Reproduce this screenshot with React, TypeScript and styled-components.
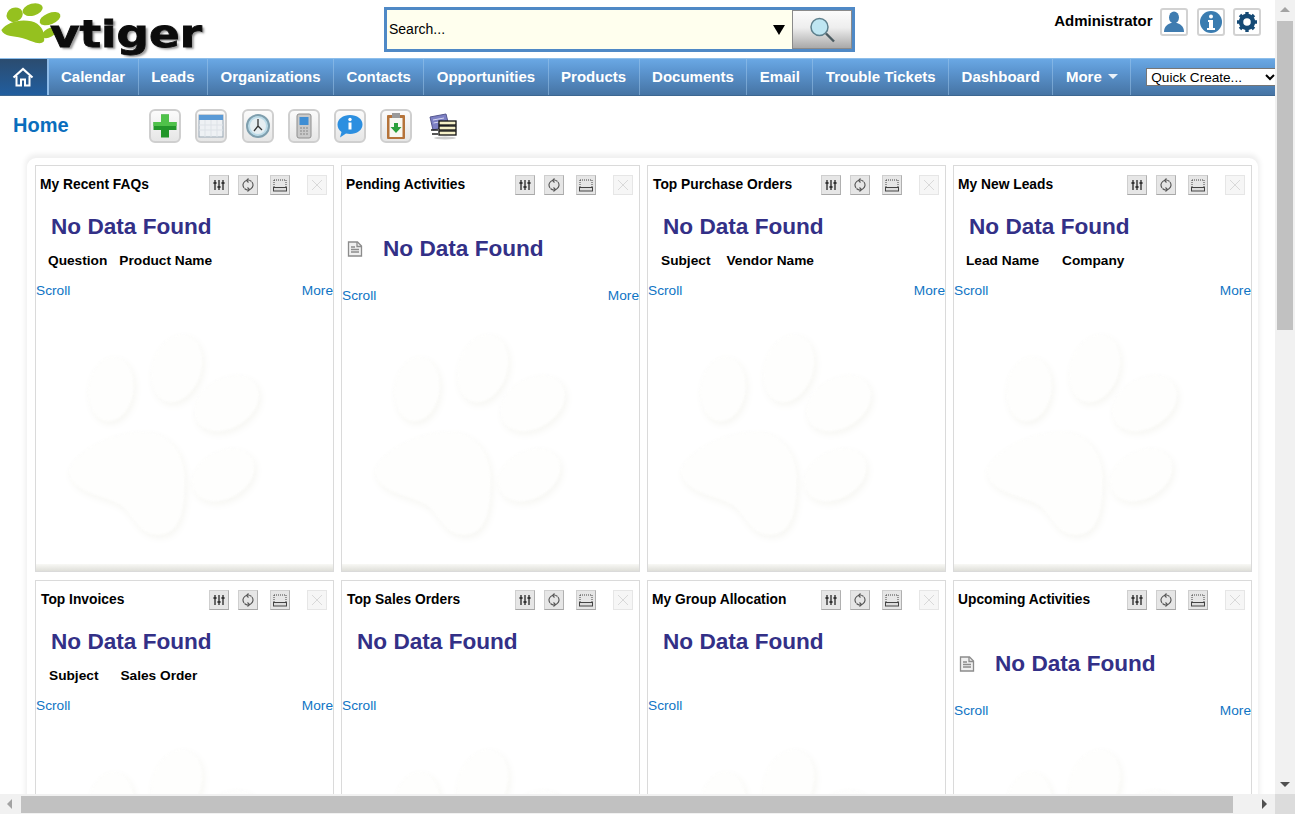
import React from "react";
import styled, { createGlobalStyle } from "styled-components";

const Global = createGlobalStyle`
  html, body { margin: 0; padding: 0; height: 100%; overflow: hidden; background: #fff; }
  body { font-family: "Liberation Sans", Arial, sans-serif; color: #000; }
  * { box-sizing: border-box; }
`;

const Shell = styled.div`
  width: 1295px; height: 814px; display: grid;
  grid-template-columns: 1275px 20px; grid-template-rows: 794px 20px; overflow: hidden;
`;
const Page = styled.div`overflow: hidden; background: #fff;`;

const VScroll = styled.div`
  background: #f1f1f1; display: flex; flex-direction: column; align-items: center; padding-top: 7px;
`;
const ArrowUp = styled.div`
  width: 0; height: 0; border-left: 5px solid transparent; border-right: 5px solid transparent;
  border-bottom: 5px solid #a3a3a3;
`;
const ArrowDown = styled.div`
  width: 0; height: 0; border-left: 5px solid transparent; border-right: 5px solid transparent;
  border-top: 5px solid #505050; margin-top: auto; margin-bottom: 7px;
`;
const VThumb = styled.div`width: 16px; height: 309px; margin-top: 9px; background: #c1c1c1;`;
const HScroll = styled.div`
  background: #f1f1f1; display: flex; align-items: center; padding: 0 7px;
`;
const ArrowLeft = styled.div`
  width: 0; height: 0; border-top: 5px solid transparent; border-bottom: 5px solid transparent;
  border-right: 5px solid #a3a3a3;
`;
const ArrowRight = styled.div`
  width: 0; height: 0; border-top: 5px solid transparent; border-bottom: 5px solid transparent;
  border-left: 5px solid #505050; margin-left: auto; margin-right: 1px;
`;
const HThumb = styled.div`width: 1212px; height: 17px; margin-left: 9px; background: #c1c1c1;`;
const Corner = styled.div`background: #dcdcdc;`;

const Header = styled.header`display: flex; height: 58px; padding-right: 13px;`;
const Logo = styled.div`position: relative; width: 205px; height: 58px; flex: none;`;
const LogoPaw = styled.svg`position: absolute; left: 0; top: 0; filter: blur(.4px);`;
const LogoText = styled.span`
  position: absolute; left: 50px; top: 12px; font: bold 38px/44px "DejaVu Sans", sans-serif;
  color: #0c0c0c; text-shadow: 2px 2px 2px #999; -webkit-text-stroke: .8px #0c0c0c;
  transform: scaleX(1.19); transform-origin: left center; filter: blur(.4px);
`;
const Search = styled.form`
  margin: 7px 0 0 179px; width: 471px; height: 45px; border: 3px solid #4f89c6; background: #ffffee;
  display: flex; align-items: stretch;
`;
const SearchInput = styled.input`
  flex: 1; min-width: 0; border: 0; background: transparent; padding: 0 0 2px 2px;
  font: 14px "Liberation Sans", sans-serif; color: #000; outline: none;
`;
const SearchCaret = styled.span`
  align-self: center; width: 0; height: 0; margin: 0 7px 0 0;
  border-left: 6px solid transparent; border-right: 6px solid transparent; border-top: 10px solid #000;
`;
const SearchButton = styled.button`
  width: 60px; padding: 0; border: 1px solid #8a8a8a; background: linear-gradient(#fbfbfb 0%, #eeeeee 45%, #a9a9a9 100%);
  display: flex; align-items: center; justify-content: center;
`;
const UserBox = styled.div`margin-left: auto; display: flex; gap: 8.5px; padding: 8px 1px 0 0; align-items: flex-start;`;
const UserName = styled.span`
  font: bold 15px/26px "Liberation Sans", sans-serif; margin-right: -1px;
`;
const UserTile = styled.button`
  width: 28px; height: 28px; padding: 0; background: #fff; border: 2px solid #d2d2d2; border-radius: 3px;
  display: flex; align-items: center; justify-content: center;
`;

const Nav = styled.nav`
  display: flex; height: 38px; overflow: hidden; align-items: stretch;
  background: linear-gradient(#6aa8e4 0%, #5d97d2 30%, #4674a4 100%);
  border-top: 1px solid #8dbeea; border-bottom: 1px solid #3d6791;
`;
const HomeTab = styled.a`
  width: 48.5px; flex: none; display: flex; align-items: center; justify-content: center;
  background: linear-gradient(#2b4c6f, #215e9f); border-right: 2px solid #8dbbe8; padding-right: 1px;
`;
const NavItem = styled.a`
  flex: none; padding: 0 12.5px 1px; display: flex; align-items: center; gap: 6px; color: #fff;
  font: bold 15px "Liberation Sans", sans-serif; border-right: 1px solid rgba(160,200,235,.5);
`;
const MoreCaret = styled.span`
  width: 0; height: 0; border-left: 5px solid transparent; border-right: 5px solid transparent;
  border-top: 5px solid #eaf2fa;
`;
const QuickCreate = styled.select`
  flex: none; width: 133px; height: 18px; margin: 9px 0 0 15px; padding: 0; background: #fff; color: #000;
  font: 13.6px "Liberation Sans", sans-serif; border: 1px solid #767676;
`;

const ActionRow = styled.div`display: flex; height: 54px; padding-top: 13px;`;
const PageTitle = styled.h1`
  margin: 0; width: 149px; padding: 4px 0 0 13px; font: bold 20px/24px "Liberation Sans", sans-serif; color: #0a6ebd; flex: none;
`;
const Actions = styled.div`display: flex; gap: 14.3px; align-items: flex-start;`;
const ActionTile = styled.button`
  width: 32px; height: 34px; padding: 0; border: 2px solid #cfcfcf; border-radius: 6px;
  background: linear-gradient(#fbfbfb, #e6e6e6); display: flex; align-items: center; justify-content: center;
`;
const PlainAction = styled.span`width: 32px; height: 34px; display: flex; align-items: center; justify-content: center;`;

const Frame = styled.div`
  margin: 8px 17px 0 27px; padding: 7px 6px 0 8px; background: #fff; border-radius: 9px 9px 0 0;
  box-shadow: 0 -2px 5px 2px #f0f0f0;
`;
const Grid = styled.div`display: grid; grid-template-columns: repeat(4, 299px); column-gap: 7px; row-gap: 8px;`;
const Card = styled.section`
  position: relative; height: 407px; border: 1px solid #dadada; background: #fff; overflow: hidden;
  &::after {
    content: ""; position: absolute; left: 0; right: 0; bottom: 0; height: 7px;
    background: linear-gradient(#f8f8f5, #dfdfd9);
  }
`;
const Watermark = styled.svg`
  position: absolute; left: -6px; top: 154px; filter: blur(1px) drop-shadow(2px 3px 3px #f6f6f2);
`;
const CardHead = styled.div<{ $left: number }>`
  position: relative; height: 38px; display: flex; align-items: center; padding: 0 0 0 ${(p) => p.$left}px;
`;
const CardTitle = styled.h2`margin: 0; font: bold 13.8px/16px "Liberation Sans", sans-serif; color: #000;`;
const CardTools = styled.div`
  position: absolute; left: 173px; top: 9px; display: flex; gap: 9px;
`;
const Tool = styled.button<{ $off?: boolean; $extra?: number }>`
  width: 20px; height: 20px; padding: 0; margin-left: ${(p) => p.$extra ?? 0}px;
  border: 1px solid ${(p) => (p.$off ? "#e6e6e6" : "#cfcfcf")};
  border-right-color: ${(p) => (p.$off ? "#e6e6e6" : "#b0b0b0")};
  border-bottom-color: ${(p) => (p.$off ? "#e6e6e6" : "#a8a8a8")};
  background: ${(p) => (p.$off ? "#f6f6f6" : "#e6e6e6")};
  display: flex; align-items: center; justify-content: center;
`;
const CardBody = styled.div<{ $doc?: boolean }>`
  position: relative; padding-top: ${(p) => (p.$doc ? 31 : 9)}px;
`;
const Message = styled.div<{ $left: number }>`
  display: flex; align-items: center; gap: 20px; padding-left: ${(p) => p.$left}px; height: 28px;
  font: bold 22.6px/28px "Liberation Sans", sans-serif; color: #333087;
`;
const Columns = styled.div<{ $left: number; $gap: number }>`
  display: flex; gap: ${(p) => p.$gap}px; height: 16px; margin-top: 12px; padding-left: ${(p) => p.$left}px;
  font: bold 13.7px/16px "Liberation Sans", sans-serif; color: #000;
`;
const Foot = styled.div<{ $top: number }>`
  display: flex; justify-content: space-between; padding-top: ${(p) => p.$top}px;
  font: 13.7px/16px "Liberation Sans", sans-serif; color: #0f74c4;
`;

const I = (p: React.SVGProps<SVGSVGElement>) => <svg width="16" height="16" viewBox="0 0 16 16" fill="none" {...p} />;

const PawMark = () => (
  <Watermark width="320" height="270" viewBox="0 0 960 810" fill="#fefefd">
    <ellipse cx="243" cy="207" rx="68" ry="98" transform="rotate(8 243 207)" />
    <ellipse cx="440" cy="145" rx="74" ry="105" transform="rotate(18 440 145)" />
    <ellipse cx="590" cy="250" rx="105" ry="75" transform="rotate(-32 590 250)" />
    <ellipse cx="580" cy="465" rx="100" ry="72" transform="rotate(-30 580 465)" />
    <path d="M115 450C135 400 230 335 340 335C420 335 465 400 465 480C465 560 455 645 385 645C320 645 310 580 270 555C220 525 120 520 115 450Z" />
  </Watermark>
);

const DocIcon = () => (
  <svg width="16" height="16" viewBox="0 0 16 16" fill="#f0f0f0" stroke="#8c8c8c" strokeWidth="1.3">
    <path d="M1.5 1h9l4 4v10h-13z" />
    <path d="M10 1v4.5h4.5M4 6h4M4 8.5h8M4 11h8" fill="none" />
  </svg>
);

const toolIcons = [
  <I key="a" stroke="#333" strokeWidth="1.4"><path d="M4 3v10M8 3v10M12 3v10" /><path d="M2.5 6h3M6.5 10h3M10.5 6h3" strokeWidth="2" /></I>,
  <I key="b" stroke="#555" strokeWidth="1.1"><path d="M11.5 4.5A5 5 0 0 0 4 11M4.5 11.5A5 5 0 0 0 12 5" /><path d="M8.5 1.5l-2 2 2 2M7.500 10.500l2 2-2 2" /></I>,
  <I key="c" stroke="#444" strokeWidth="1"><path d="M2 3h12" strokeDasharray="1 1" /><path d="M2 3v7M14 3v7" strokeDasharray="1 1" /><rect x="1.5" y="10.5" width="13" height="3.5" fill="#ddd" /></I>,
  <I key="d" stroke="#d9d9d9" strokeWidth="1"><path d="M3 3l10 10M13 3L3 13" /></I>,
];

type W = { title: string; head: number; msg: number; doc?: boolean; cols?: string[]; colLeft?: number; colGap?: number; more?: boolean };

const widgets: W[] = [
  { title: "My Recent FAQs", head: 4, msg: 15, cols: ["Question", "Product Name"], colLeft: 12, colGap: 12, more: true },
  { title: "Pending Activities", head: 4, msg: 5, doc: true, more: true },
  { title: "Top Purchase Orders", head: 5, msg: 15, cols: ["Subject", "Vendor Name"], colLeft: 13, colGap: 16, more: true },
  { title: "My New Leads", head: 4, msg: 15, cols: ["Lead Name", "Company"], colLeft: 12, colGap: 23, more: true },
  { title: "Top Invoices", head: 5, msg: 15, cols: ["Subject", "Sales Order"], colLeft: 13, colGap: 22, more: true },
  { title: "Top Sales Orders", head: 5, msg: 15, more: false },
  { title: "My Group Allocation", head: 4, msg: 15, more: false },
  { title: "Upcoming Activities", head: 4, msg: 5, doc: true, more: true },
];

const footGap = (w: W) => (w.cols ? 14 : w.doc ? 25 : 42);

const Widget = ({ w }: { w: W }) => (
  <Card>
    <PawMark />
    <CardHead $left={w.head}>
      <CardTitle>{w.title}</CardTitle>
      <CardTools>
        <Tool>{toolIcons[0]}</Tool>
        <Tool>{toolIcons[1]}</Tool>
        <Tool $extra={3}>{toolIcons[2]}</Tool>
        <Tool $off $extra={8}>{toolIcons[3]}</Tool>
      </CardTools>
    </CardHead>
    <CardBody $doc={w.doc}>
      <Message $left={w.msg}>{w.doc && <DocIcon />}No Data Found</Message>
      {w.cols && (
        <Columns $left={w.colLeft ?? 0} $gap={w.colGap ?? 0}>
          {w.cols.map((c) => <span key={c}>{c}</span>)}
        </Columns>
      )}
      <Foot $top={footGap(w)}>
        <a>Scroll</a>
        {w.more && <a>More</a>}
      </Foot>
    </CardBody>
  </Card>
);

const navItems = ["Calendar", "Leads", "Organizations", "Contacts", "Opportunities", "Products", "Documents", "Email", "Trouble Tickets", "Dashboard"];

export default function App() {
  return (
    <>
      <Global />
      <Shell>
        <Page>
          <Header>
            <Logo>
              <LogoPaw width="70" height="58" viewBox="0 0 210 174" fill="#95c11f">
                <ellipse cx="44" cy="44" rx="25" ry="21" transform="rotate(-25 44 44)" />
                <ellipse cx="98" cy="29" rx="31" ry="18" transform="rotate(-15 98 29)" />
                <ellipse cx="150" cy="56" rx="33" ry="17" transform="rotate(-22 150 56)" />
                <ellipse cx="148" cy="98" rx="24" ry="13" transform="rotate(-30 148 98)" />
                <path d="M4 90C20 68 58 56 94 64C126 72 136 100 132 124C120 138 94 122 66 114C40 108 12 110 4 90Z" />
              </LogoPaw>
              <LogoText>vtiger</LogoText>
            </Logo>
            <Search>
              <SearchInput defaultValue="Search..." />
              <SearchCaret />
              <SearchButton type="button" aria-label="Search">
                <svg width="30" height="30" viewBox="0 0 30 30" fill="none">
                  <circle cx="12.5" cy="12" r="8.5" fill="#bfe6f2" stroke="#5d7f8c" strokeWidth="1.5" />
                  <path d="M19 18.5l8 8" stroke="#4a5a60" strokeWidth="2.4" />
                </svg>
              </SearchButton>
            </Search>
            <UserBox>
              <UserName>Administrator</UserName>
              <UserTile aria-label="User">
                <svg width="24" height="24" viewBox="0 0 24 24" fill="#3f7cb0">
                  <ellipse cx="12" cy="7.5" rx="5" ry="6" />
                  <path d="M2 22c0-6 4-8 7-9h6c3 1 7 3 7 9z" />
                </svg>
              </UserTile>
              <UserTile aria-label="Info">
                <svg width="24" height="24" viewBox="0 0 24 24">
                  <circle cx="12" cy="12" r="11" fill="#3a7cb0" />
                  <circle cx="12" cy="6.5" r="2" fill="#fff" />
                  <path d="M9 10h5v8h2v2H8v-2h2v-6H9z" fill="#fff" />
                </svg>
              </UserTile>
              <UserTile aria-label="Settings">
                <svg width="24" height="24" viewBox="0 0 24 24" fill="none" stroke="#154a75">
                  <circle cx="12" cy="12" r="6" strokeWidth="4.5" />
                  <path d="M12 2v4M12 18v4M2 12h4M18 12h4M5 5l3 3M16 16l3 3M19 5l-3 3M8 16l-3 3" strokeWidth="3.4" />
                </svg>
              </UserTile>
            </UserBox>
          </Header>
          <Nav>
            <HomeTab aria-label="Home">
              <svg width="22" height="22" viewBox="0 0 22 22" fill="none" stroke="#fff" strokeWidth="2.2">
                <path d="M1.500 11.500L11 3l9.500 8.500" />
                <path d="M4.500 10v9.500h4.500v-6h4v6h4.500V10" strokeWidth="2" />
              </svg>
            </HomeTab>
            {navItems.map((n) => <NavItem key={n}>{n}</NavItem>)}
            <NavItem>More<MoreCaret /></NavItem>
            <QuickCreate defaultValue="q"><option value="q">Quick Create...</option></QuickCreate>
          </Nav>
          <ActionRow>
            <PageTitle>Home</PageTitle>
            <Actions>
              <ActionTile aria-label="Add">
                <svg width="26" height="26" viewBox="0 0 26 26">
                  <path d="M9 1.5h8v7.500h7.500v8H17v7.500H9V17H1.500V9H9z" fill="#22962a" />
                  <path d="M9 1.5h8v7.500h7.500v4H1.500V9H9z" fill="#4fc24a" />
                </svg>
              </ActionTile>
              <ActionTile aria-label="Calendar">
                <svg width="26" height="26" viewBox="0 0 26 26">
                  <rect x="1" y="2" width="24" height="22" fill="#eef1f4" stroke="#9aa8b5" />
                  <rect x="1" y="2" width="24" height="5" fill="#5a9ad6" />
                  <path d="M1 12h24M1 17h24M7 7v17M13 7v17M19 7v17" stroke="#dde2e7" />
                </svg>
              </ActionTile>
              <ActionTile aria-label="Clock">
                <svg width="26" height="26" viewBox="0 0 26 26" fill="none">
                  <circle cx="13" cy="13" r="11" fill="#bcdbe8" stroke="#7f9fae" strokeWidth="2" />
                  <circle cx="13" cy="13" r="8" fill="#e6eef2" />
                  <path d="M13 6v7l-4 5M13 13l4 4" stroke="#333" strokeWidth="1.3" />
                </svg>
              </ActionTile>
              <ActionTile aria-label="Phone">
                <svg width="26" height="26" viewBox="0 0 26 26">
                  <rect x="6" y="1" width="14" height="24" rx="2" fill="#c9c9c9" stroke="#8e8e8e" />
                  <rect x="8.5" y="4" width="9" height="8" fill="#3f8ed4" />
                  <path d="M9 15h8M9 18h8M9 21h8" stroke="#888" strokeWidth="1.2" strokeDasharray="2 1" />
                </svg>
              </ActionTile>
              <ActionTile aria-label="Message">
                <svg width="28" height="26" viewBox="0 0 28 26">
                  <path d="M14 2c7 0 12.500 4 12.500 9.500S21 21 14 21c-1.500 0-2.800-.2-4-.5L4 24.500l1.500-5.500C3 17 1.500 14.500 1.500 11.500 1.500 6 7 2 14 2z" fill="#2c8fe0" />
                  <circle cx="14" cy="6.500" r="1.700" fill="#fff" />
                  <path d="M12.500 9.500h3v7h-3z" fill="#fff" />
                </svg>
              </ActionTile>
              <ActionTile aria-label="Task">
                <svg width="24" height="28" viewBox="0 0 24 28">
                  <rect x="3" y="3" width="18" height="24" rx="1" fill="#b5733a" />
                  <rect x="5.500" y="6" width="13" height="19" fill="#f8f8f2" />
                  <rect x="8" y="1" width="8" height="5" fill="#9a9a9a" />
                  <path d="M10 11h4v4h3.500L12 21l-5.500-6H10z" fill="#2aa03a" />
                </svg>
              </ActionTile>
              <PlainAction>
                <svg width="30" height="28" viewBox="0 0 30 28">
                  <path d="M2 5l16-3 3 12-16 4z" fill="#7d80c4" stroke="#55578f" />
                  <path d="M5 8l11-2M5.500 11l11-2" stroke="#d6d7ef" />
                  <g fill="#f5f0c8" stroke="#111" strokeWidth="1.300">
                    <rect x="11" y="9" width="17" height="4" />
                    <rect x="11" y="14" width="17" height="4" />
                    <rect x="11" y="19" width="17" height="4" />
                  </g>
                  <path d="M3 18h7M4 22h6" stroke="#222" strokeWidth="1.300" />
                  <ellipse cx="17" cy="26" rx="11" ry="1.500" fill="#ccc" />
                </svg>
              </PlainAction>
            </Actions>
          </ActionRow>
          <Frame>
            <Grid>
              {widgets.map((w) => <Widget key={w.title} w={w} />)}
            </Grid>
          </Frame>
        </Page>
        <VScroll>
          <ArrowUp />
          <VThumb />
          <ArrowDown />
        </VScroll>
        <HScroll>
          <ArrowLeft />
          <HThumb />
          <ArrowRight />
        </HScroll>
        <Corner />
      </Shell>
    </>
  );
}
